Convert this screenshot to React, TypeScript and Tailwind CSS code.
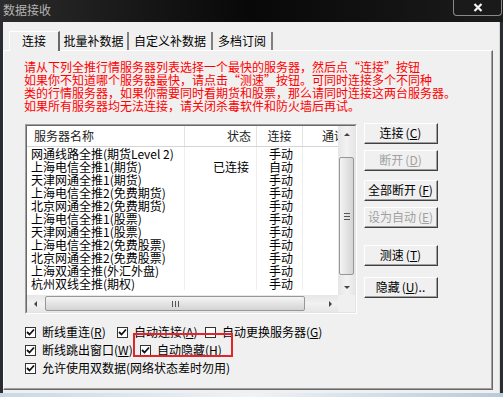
import React from 'react'

const rows: [string, string, string][] = [
  ['网通线路全推(期货Level 2)', '', '手动'],
  ['上海电信全推1(期货)', '已连接', '自动'],
  ['天津网通全推1(期货)', '', '手动'],
  ['上海电信全推2(免费期货)', '', '手动'],
  ['北京网通全推2(免费期货)', '', '手动'],
  ['上海电信全推1(股票)', '', '手动'],
  ['天津网通全推1(股票)', '', '手动'],
  ['上海电信全推2(免费股票)', '', '手动'],
  ['北京网通全推2(免费股票)', '', '手动'],
  ['上海双通全推(外汇外盘)', '', '手动'],
  ['杭州双线全推(期权)', '', '手动'],
]

function Key({ k, spaced }: { k: string; spaced?: boolean }) {
  return (
    <span className={spaced ? 'ml-[2px]' : ''}>
      (<span className="underline">{k}</span>)
    </span>
  )
}

function Btn({ label, k, disabled, dots, className }: { label: string; k: string; disabled?: boolean; dots?: boolean; className?: string }) {
  return (
    <div
      className={`w-[74px] h-[21px] bg-[#f0f0f0] border border-t-white border-l-white border-r-[#404040] border-b-[#404040] ${className ?? ''}`}
    >
      <div
        className={`w-full h-full border-r border-b border-[#a0a0a0] flex items-center justify-center text-[12px] leading-none ${disabled ? 'text-[#a0a0a0]' : 'text-black'}`}
      >
        {label}
        <Key k={k} spaced />
        {dots && '..'}
      </div>
    </div>
  )
}

function Check({ checked, label, k, className }: { checked: boolean; label: string; k?: string; className?: string }) {
  return (
    <div className={`flex items-center h-[18px] ${className ?? ''}`}>
      <div className="w-[11px] h-[11px] border border-[#333] bg-white flex items-center justify-center">
        {checked && (
          <svg width="9" height="9" viewBox="0 0 9 9">
            <path d="M1 4 L3.5 6.5 L8 1.5" stroke="#111" strokeWidth="1.8" fill="none" />
          </svg>
        )}
      </div>
      <span className="ml-[6px] text-[12px] leading-none text-black whitespace-nowrap">
        {label}
        {k && <Key k={k} />}
      </span>
    </div>
  )
}

function Arrow({ dir }: { dir: 'up' | 'down' | 'left' | 'right' }) {
  const d = {
    up: 'M1 5 L4 2 L7 5 Z',
    down: 'M1 3 L4 6 L7 3 Z',
    left: 'M5 1 L2 4 L5 7 Z',
    right: 'M3 1 L6 4 L3 7 Z',
  }[dir]
  return (
    <div className="w-[17px] h-[17px] flex items-center justify-center">
      <svg width="8" height="8" viewBox="0 0 8 8">
        <path d={d} fill="#444" />
      </svg>
    </div>
  )
}

export default function App() {
  return (
    <div className="w-[503px] h-[397px] overflow-hidden bg-[#111] font-['SimSun','Noto_Sans_CJK_SC',sans-serif]">
      {/* title bar */}
      <div className="h-[22px] flex justify-between bg-gradient-to-r from-[#2c2c2c] via-[#080808] to-[#1c1c1c]">
        <span className="pl-[3px] pt-[4px] text-[12px] leading-none text-[#b4b4b4]">数据接收</span>
        <div className="w-[49px] h-[16px] mr-[1px] border border-t-0 border-[#8a8a8a] rounded-b-[4px] bg-[#1a1a1a] flex items-center justify-center">
          <svg width="10" height="9" viewBox="0 0 10 9">
            <path d="M1.5 1 L8.5 8 M8.5 1 L1.5 8" stroke="#f4f4f4" strokeWidth="2.2" />
          </svg>
        </div>
      </div>

      <div className="flex h-[371px]">
        <div className="w-[3px] bg-[#2a2d33]" />
        <div className="w-[497px] bg-[#f0f0f0] border-r border-[#d8d8d8] flex flex-col pt-[9px]">
          {/* tabs */}
          <div className="flex items-end h-[19px] pl-[6px] text-[12px] leading-none text-black">
            <div className="relative z-10 w-[51px] h-[20px] -mb-[1px] bg-[#f0f0f0] border-l border-t border-white border-r-2 border-r-[#696969] flex items-center justify-center pb-[2px]">
              连接
            </div>
            <div className="w-[69px] h-[18px] border-r-2 border-[#808080] flex items-center justify-center">批量补数据</div>
            <div className="w-[84px] h-[18px] border-r-2 border-[#808080] flex items-center justify-center">自定义补数据</div>
            <div className="w-[60px] h-[18px] border-r-2 border-[#808080] flex items-center justify-center">多档订阅</div>
          </div>

          {/* tab panel */}
          <div className="w-[490px] h-[340px] border border-t-white border-l-white border-r-[#696969] border-b-[#696969]">
            <div className="w-full h-full border-r border-b border-[#a0a0a0] pl-[20px] pt-[9px]">
              <div className="text-[12px] leading-[13px] text-[#ff0000] whitespace-nowrap">
                <div>请从下列全推行情服务器列表选择一个最快的服务器，然后点“连接”按钮</div>
                <div>如果你不知道哪个服务器最快，请点击“测速”按钮。可同时连接多个不同种</div>
                <div>类的行情服务器，如果你需要同时看期货和股票，那么请同时连接这两台服务器。</div>
                <div>如果所有服务器均无法连接，请关闭杀毒软件和防火墙后再试。</div>
              </div>

              <div className="flex mt-[11px]">
                {/* list box */}
                <div className="mt-[1px] ml-[1px] w-[332px] h-[190px] border border-t-[#a0a0a0] border-l-[#a0a0a0] border-r-white border-b-white">
                  <div className="w-full h-full border border-t-[#696969] border-l-[#696969] border-r-[#e3e3e3] border-b-[#e3e3e3] bg-white flex flex-col">
                    <div className="flex h-[169px]">
                      <div className="w-[311px] overflow-hidden text-[12px] text-black">
                        <div className="flex h-[21px] border-b border-[#d5d5d5] text-[#1e1e1e] leading-none whitespace-nowrap">
                          <div className="w-[158px] shrink-0 border-r border-[#e3e3e3] flex items-center pl-[7px]">服务器名称</div>
                          <div className="w-[72px] shrink-0 border-r border-[#e3e3e3] flex items-center justify-end pr-[5px]">状态</div>
                          <div className="w-[46px] shrink-0 border-r border-[#e3e3e3] flex items-center justify-center">连接</div>
                          <div className="w-[35px] shrink-0 flex items-center pl-[19px] overflow-hidden whitespace-nowrap">通讯</div>
                        </div>
                        {rows.map(([name, state, conn]) => (
                          <div key={name} className="flex h-[13px] leading-[13px] whitespace-nowrap">
                            <div className="w-[158px] shrink-0 border-r border-[#efefef] pl-[4px]">{name}</div>
                            <div className="w-[72px] shrink-0 border-r border-[#efefef] text-right pr-[7px]">{state}</div>
                            <div className="w-[46px] shrink-0 border-r border-[#efefef] text-center pl-[3px]">{conn}</div>
                            <div className="w-[35px] shrink-0" />
                          </div>
                        ))}
                      </div>
                      {/* vertical scrollbar */}
                      <div className="w-[17px] bg-gradient-to-r from-[#e6e6e6] via-[#f2f2f2] to-[#e6e6e6] flex flex-col">
                        <Arrow dir="up" />
                        <div className="mt-[14px] mx-[1px] h-[118px] rounded-[2px] border border-[#979797] bg-gradient-to-r from-[#f4f4f4] to-[#d4d4d4] flex flex-col items-center justify-center gap-[2px]">
                          <div className="w-[6px] h-[1px] bg-[#555]" />
                          <div className="w-[6px] h-[1px] bg-[#555]" />
                          <div className="w-[6px] h-[1px] bg-[#555]" />
                        </div>
                        <div className="flex-1" />
                        <Arrow dir="down" />
                      </div>
                    </div>
                    {/* horizontal scrollbar */}
                    <div className="flex h-[17px] bg-gradient-to-b from-[#e6e6e6] via-[#f2f2f2] to-[#e6e6e6]">
                      <Arrow dir="left" />
                      <div className="my-[1px] ml-[1px] w-[260px] rounded-[2px] border border-[#979797] bg-gradient-to-b from-[#f4f4f4] to-[#d4d4d4] flex items-center justify-center gap-[2px]">
                        <div className="w-[1px] h-[6px] bg-[#555]" />
                        <div className="w-[1px] h-[6px] bg-[#555]" />
                        <div className="w-[1px] h-[6px] bg-[#555]" />
                      </div>
                      <div className="flex-1" />
                      <Arrow dir="right" />
                      <div className="w-[17px] bg-[#f0f0f0]" />
                    </div>
                  </div>
                </div>

                {/* buttons */}
                <div className="ml-[7px] flex flex-col">
                  <Btn label="连接" k="C" />
                  <Btn label="断开" k="D" disabled className="mt-[6px]" />
                  <Btn label="全部断开" k="F" className="mt-[9px]" />
                  <Btn label="设为自动" k="E" disabled className="mt-[6px]" />
                  <Btn label="测速" k="T" className="mt-[17px]" />
                  <Btn label="隐藏" k="U" dots className="mt-[11px]" />
                </div>
              </div>

              {/* options */}
              <div className="mt-[9px] ml-[1px] flex flex-col">
                <div className="flex">
                  <Check checked label="断线重连" k="R" className="w-[92px]" />
                  <Check checked label="自动连接" k="A" className="w-[88px]" />
                  <Check checked={false} label="自动更换服务器" k="G" />
                </div>
                <div className="flex">
                  <Check checked label="断线跳出窗口" k="W" className="w-[115px]" />
                  <div className="relative">
                    <Check checked label="自动隐藏" k="H" />
                    <div className="absolute left-[-7px] top-[-8px] w-[100px] h-[24px] border-2 border-[#e0262c]" />
                  </div>
                </div>
                <Check checked label="允许使用双数据(网络状态差时勿用)" />
              </div>
            </div>
          </div>
        </div>
        <div className="w-[3px] bg-[#2a2d33]" />
      </div>
      <div className="h-[4px] bg-gradient-to-r from-[#c9d8e6] via-[#eef3f7] to-[#b8cadb]" />
    </div>
  )
}
